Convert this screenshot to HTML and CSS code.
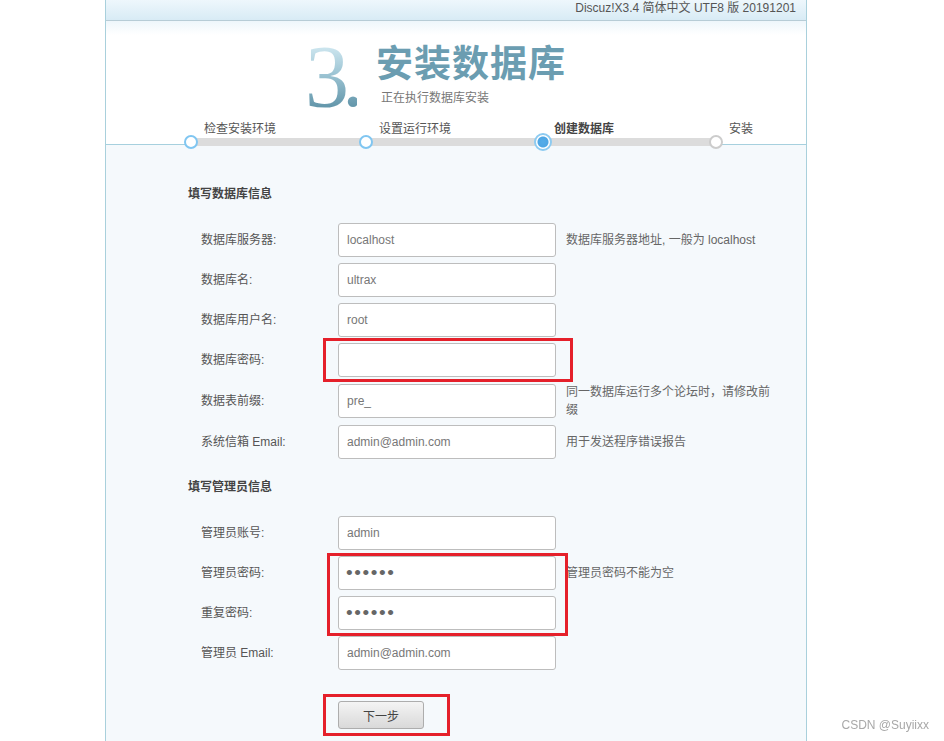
FILE: index.html
```html
<!DOCTYPE html>
<html lang="zh-CN">
<head>
<meta charset="UTF-8">
<meta name="viewport" content="width=device-width, initial-scale=1.0">
<title>Discuz! 安装向导</title>
<link rel="stylesheet" href="styles.css">
</head>
<body>

<div class="wrap">
    <div class="topbar">Discuz!X3.4 简体中文 UTF8 版 20191201</div>

    <div class="head">
        <div class="title">
            <div class="num">3.</div>
            <div class="titleText">
                <h1>安装数据库</h1>
                <p>正在执行数据库安装</p>
            </div>
        </div>
        <ul class="steps">
            <li class="done"><span>检查安装环境</span><i></i></li>
            <li class="done"><span>设置运行环境</span><i></i></li>
            <li class="current"><span>创建数据库</span><i></i></li>
            <li><span>安装</span><i></i></li>
        </ul>
    </div>

    <div class="main">
        <h2>填写数据库信息</h2>
        <div class="row">
            <label>数据库服务器:</label>
            <div class="field"><input type="text" value="localhost"></div>
            <div class="hint">数据库服务器地址, 一般为 localhost</div>
        </div>
        <div class="row">
            <label>数据库名:</label>
            <div class="field"><input type="text" value="ultrax"></div>
        </div>
        <div class="row">
            <label>数据库用户名:</label>
            <div class="field"><input type="text" value="root"></div>
        </div>
        <div class="row">
            <label>数据库密码:</label>
            <div class="field"><input type="text" value=""><span class="mark markDbPw"></span></div>
        </div>
        <div class="row">
            <label>数据表前缀:</label>
            <div class="field"><input type="text" value="pre_"></div>
            <div class="hint">同一数据库运行多个论坛时，请修改前缀</div>
        </div>
        <div class="row">
            <label>系统信箱 Email:</label>
            <div class="field"><input type="text" value="admin@admin.com"></div>
            <div class="hint">用于发送程序错误报告</div>
        </div>

        <h2 class="second">填写管理员信息</h2>
        <div class="row">
            <label>管理员账号:</label>
            <div class="field"><input type="text" value="admin"></div>
        </div>
        <div class="row">
            <label>管理员密码:</label>
            <div class="field"><input type="password" value="123456"><span class="mark markAdminPw"></span></div>
            <div class="hint">管理员密码不能为空</div>
        </div>
        <div class="row">
            <label>重复密码:</label>
            <div class="field"><input type="password" value="123456"></div>
        </div>
        <div class="row">
            <label>管理员 Email:</label>
            <div class="field"><input type="text" value="admin@admin.com"></div>
        </div>

        <div class="btnRow">
            <div class="field"><button type="button">下一步</button><span class="mark markBtn"></span></div>
        </div>
    </div>
</div>

<div class="watermark">CSDN @Suyiixx</div>

</body>
</html>
```

FILE: styles.css
```css
/* Overall Style */
body {
    margin: 0;
    background: #fff;
    font-family: "Liberation Sans", "Noto Sans CJK SC", sans-serif;
    font-size: 12px;
    color: #555;
}
.wrap {
    width: 700px;
    margin-left: 105px;
    border-left: 1px solid #a9d0dc;
    border-right: 1px solid #a9d0dc;
}

/* Top bar */
.topbar {
    height: 20px;
    line-height: 16px;
    padding-right: 10px;
    text-align: right;
    color: #555;
    background: linear-gradient(#eef7fc, #d8ebf5);
    border-bottom: 1px solid #b7ccd6;
}

/* Title */
.head {
    background: linear-gradient(#eef6fb, #fff 14px);
    border-bottom: 1px solid #a6d0de;
    padding-top: 12px;
}
.title {
    display: flex;
    padding-left: 199px;
}
.num {
    font-family: "Liberation Serif", serif;
    font-size: 88px;
    line-height: 88px;
    height: 88px;
    letter-spacing: -7px;
    background: linear-gradient(#d6ecf4 10%, #9fc6d5 45%, #5a8fa4 90%);
    -webkit-background-clip: text;
    background-clip: text;
    color: transparent;
}
.titleText {
    margin-left: 19px;
    padding-top: 11px;
}
.titleText h1 {
    margin: 0;
    font-size: 37px;
    line-height: 41px;
    font-weight: bold;
    color: #6b9db1;
    letter-spacing: 1px;
}
.titleText p {
    margin: 5px 0 0 5px;
    line-height: 16px;
    color: #777;
}

/* Steps */
.steps {
    position: relative;
    z-index: 1;
    display: grid;
    grid-template-columns: 175px 177px 173px 80px;
    list-style: none;
    margin: 1px 0 -7px 78px;
    padding: 0;
}
.steps::before {
    content: "";
    position: absolute;
    left: 7px;
    top: 16px;
    width: 525px;
    height: 8px;
    background: #dcdcdc;
}
.steps li {
    display: flex;
    flex-direction: column;
    align-items: flex-start;
}
.steps span {
    line-height: 14px;
    padding-left: 20px;
    color: #555;
    white-space: nowrap;
}
.steps i {
    position: relative;
    width: 10px;
    height: 10px;
    margin-top: -1px;
    border: 2px solid #cccccc;
    border-radius: 50%;
    background: #fff;
}
.steps .done i {
    border-color: #80c6f1;
}
.steps .current span {
    font-weight: bold;
    color: #444;
    padding-left: 18px;
}
.steps .current i {
    width: 14px;
    height: 14px;
    margin: -3px 0 0 -2px;
    border-color: #8dcbf1;
    background: radial-gradient(circle, #55ace8 0, #4ea6e4 5px, #fff 6px);
}

/* Form */
.main {
    background: #f5f9fc;
    padding: 41px 0 40px;
}
.main h2 {
    margin: 0 0 18px;
    padding-left: 82px;
    font-size: 12px;
    line-height: 16px;
    font-weight: bold;
    color: #444;
}
.main h2.second {
    margin-top: 17px;
}
.row {
    display: flex;
    align-items: center;
    padding: 3px 0 3px 95px;
}
.row label {
    width: 137px;
    flex-shrink: 0;
    line-height: 16px;
    margin-top: -1px;
    color: #555;
}
.field {
    position: relative;
}
.field input {
    display: block;
    box-sizing: border-box;
    width: 218px;
    height: 34px;
    padding: 0 8px;
    border: 1px solid #bdbdbd;
    border-radius: 3px;
    background: #fff;
    font-family: "Liberation Sans", sans-serif;
    font-size: 12px;
    color: #777;
}
.field input[type="password"] {
    padding-left: 7px;
    color: #666;
    font-size: 19px;
    letter-spacing: 1.6px;
}
.hint {
    width: 206px;
    margin-left: 10px;
    line-height: 18px;
    color: #666;
}

/* Button */
.btnRow {
    padding: 28px 0 0 232px;
}
.btnRow button {
    display: block;
    width: 86px;
    height: 28px;
    border: 1px solid #adadad;
    border-radius: 3px;
    background: linear-gradient(#f4f4f4, #d9d9d9);
    font-family: "Liberation Sans", "Noto Sans CJK SC", sans-serif;
    font-size: 12px;
    color: #444;
}

/* Red annotation boxes */
.mark {
    position: absolute;
    border: 3px solid #e5202a;
    box-sizing: border-box;
    pointer-events: none;
}
.markDbPw {
    left: -15px;
    top: -5px;
    width: 250px;
    height: 44px;
}
.markAdminPw {
    left: -11px;
    top: -3px;
    width: 241px;
    height: 83px;
}
.markBtn {
    left: -15px;
    top: -7px;
    width: 127px;
    height: 42px;
}

/* Watermark */
.watermark {
    position: fixed;
    right: 15px;
    bottom: 9px;
    color: #a8a8a8;
    font-size: 12px;
    font-family: "Liberation Sans", sans-serif;
}
```
